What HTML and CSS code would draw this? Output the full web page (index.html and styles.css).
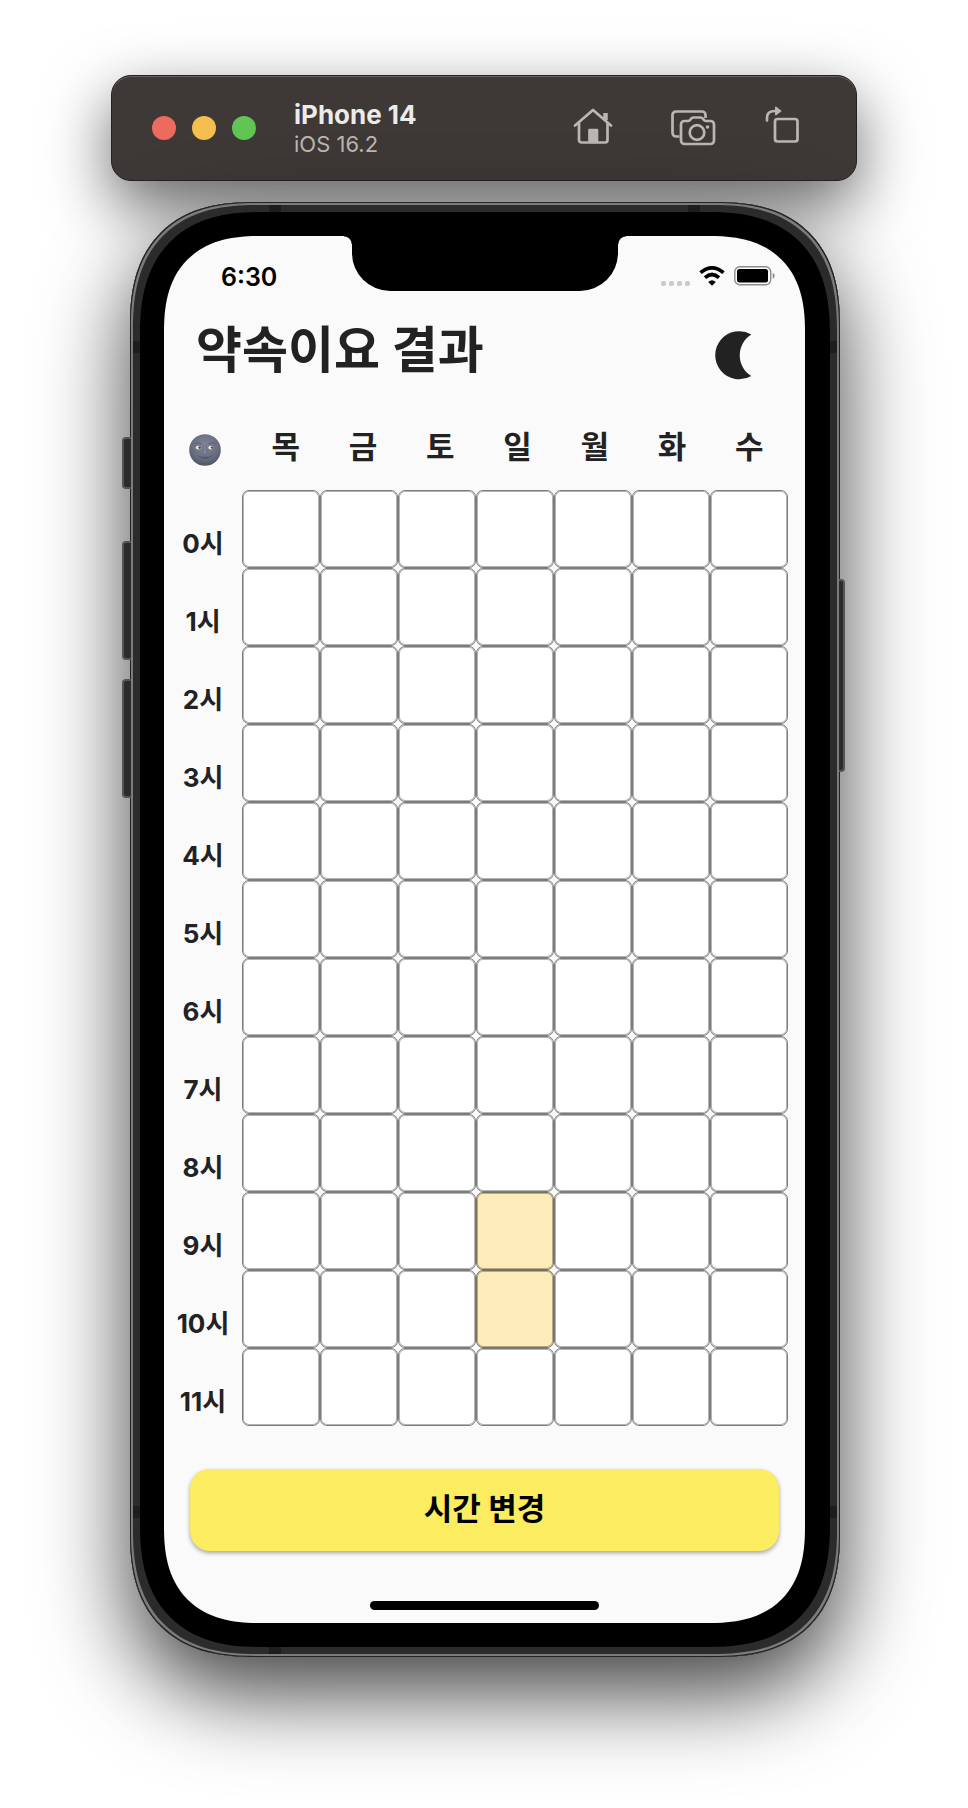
FILE: index.html
```html
<!DOCTYPE html>
<html lang="ko">
<head>
<meta charset="utf-8">
<meta name="viewport" content="width=device-width, initial-scale=1">
<title>약속이요 결과</title>
<link rel="stylesheet" href="styles.css">
</head>
<body>
<div class="simulator">
  <header class="toolbar">
    <div class="lights">
      <button class="light light-close" aria-label="Close"></button>
      <button class="light light-min" aria-label="Minimize"></button>
      <button class="light light-zoom" aria-label="Zoom"></button>
    </div>
    <div class="device">
      <div class="device-name">iPhone 14</div>
      <div class="device-os">iOS 16.2</div>
    </div>
    <div class="tools">
      <button class="tool" aria-label="Home">
        <svg width="48" height="48" viewBox="-1 0 48 48" fill="none" stroke="currentColor" stroke-width="2.700" stroke-linecap="round" stroke-linejoin="round"><path d="M6 23.500L24 8L42 23.500M10 21V38a2.500 2.500 0 0 0 2.500 2.500H36a2.500 2.500 0 0 0 2.500-2.500V21"/><path d="M36.500 11V18" stroke-width="4.500" stroke-linecap="butt"/><path d="M20.500 28h7.500v12h-7.500z" fill="currentColor"/></svg>
      </button>
      <button class="tool" aria-label="Screenshot">
        <svg width="48" height="48" viewBox="-4 0 48 48" fill="none" stroke="currentColor" stroke-width="2.700" stroke-linejoin="round"><path d="M10.500 34.500H7a3.500 3.500 0 0 1-3.500-3.500V13A3.500 3.500 0 0 1 7 9.500h26a3.500 3.500 0 0 1 3.500 3.500v3"/><path d="M12 22.500a3.500 3.500 0 0 1 3.500-3.500h3.500q1.500 0 2.500-1.500l.5-.8q1-1.200 2.500-1.200h7q1.500 0 2.500 1.200l.5.8q1 1.500 2.500 1.500H41.500a3.500 3.500 0 0 1 3.500 3.500V38.500a3.500 3.500 0 0 1-3.500 3.500H15.500a3.500 3.500 0 0 1-3.500-3.500z"/><circle cx="28" cy="30.500" r="7.300"/><circle cx="38.500" cy="25" r="1.800" fill="currentColor" stroke="none"/></svg>
      </button>
      <button class="tool" aria-label="Rotate">
        <svg width="48" height="48" viewBox="1 1 48 48" fill="none" stroke="currentColor" stroke-width="2.700" stroke-linecap="round" stroke-linejoin="round"><rect x="14" y="18" width="22.500" height="22.500" rx="2.500"/><path d="M6 19.500v-3q0-6.500 8-6.500"/><path d="M14.800 6.300v7.400l4.900-3.700z" fill="currentColor" stroke-width="1.500"/></svg>
      </button>
    </div>
  </header>

  <main class="phone">
    <i class="side side-mute"></i><i class="side side-up"></i><i class="side side-down"></i><i class="side side-power"></i>
    <i class="band band-top band-l"></i><i class="band band-top band-r"></i>
    <i class="band band-bottom band-l"></i>
    <i class="band band-left band-hi"></i><i class="band band-left band-lo"></i>
    <i class="band band-right band-hi"></i><i class="band band-right band-lo"></i>
    <div class="screen">
      <div class="status">
        <div class="time">6:30</div>
        <div class="notch"></div>
        <div class="signals">
          <span class="cell-dots"><i></i><i></i><i></i><i></i></span>
          <svg width="26" height="20" viewBox="0 0 26 20" fill="none" stroke="#000" stroke-width="3.600"><path d="M1.500 6.700Q13-3 24.500 6.700"/><path d="M6 11.600Q13 5.400 20 11.600"/><path d="M13 19.800L9.200 16Q13 12.600 16.800 16z" fill="#000" stroke="none"/></svg>
          <svg width="41" height="20" viewBox="0 0 41 20"><rect x=".8" y=".8" width="35.900" height="18" rx="5" fill="none" stroke="#8d8d8d" stroke-width="1.400"/><rect x="3" y="3" width="31" height="13.500" rx="2.500"/><path d="M38.700 6.800q2 1 2 3t-2 3z" fill="#8d8d8d"/></svg>
        </div>
      </div>

      <div class="heading">
        <h1 class="title">약속이요 결과</h1>
        <button class="theme" aria-label="다크 모드">
          <svg width="36" height="48" viewBox="0 0 36 48"><path d="M35.300 3.500A24 24 0 1 0 35.300 45C20 35.500 20 13 35.300 3.500z" fill="#222"/></svg>
        </button>
      </div>

      <table class="schedule">
        <thead>
          <tr>
            <th class="phase"><svg width="32" height="32" viewBox="0 0 32 32" role="img" aria-label="새벽"><defs><radialGradient id="face" cx=".5" cy=".35" r=".65"><stop offset="0" stop-color="#81859a"/><stop offset=".7" stop-color="#666b7e"/><stop offset="1" stop-color="#505565"/></radialGradient></defs><circle cx="16" cy="16" r="15.800" fill="url(#face)"/><path d="M14.800 11q-.2 5-1.200 8.500 2.400 2 4.800 0Q17.400 16 17.200 11" fill="#7f8497" stroke="#626779" stroke-width=".6"/><path d="M9 21.500q7 6 14 0M12.500 23q3.500 1.200 7 0" fill="none" stroke="#4e5363" stroke-width=".8"/><path d="M5.500 10q3.500-2.500 7 0M19.500 10q3.500-2.500 7 0" fill="none" stroke="#5a5f70" stroke-width="1"/><ellipse cx="9.400" cy="13.600" rx="2.700" ry="1.900" fill="#eee9e4"/><ellipse cx="22" cy="13.600" rx="2.700" ry="1.900" fill="#eee9e4"/><circle cx="10.600" cy="13.600" r="1.400" fill="#6b5148"/><circle cx="23.200" cy="13.600" r="1.400" fill="#6b5148"/></svg></th>
            <th>목</th><th>금</th><th>토</th><th>일</th><th>월</th><th>화</th><th>수</th>
          </tr>
        </thead>
        <tbody>
          <tr><th>0시</th><td></td><td></td><td></td><td></td><td></td><td></td><td></td></tr>
          <tr><th>1시</th><td></td><td></td><td></td><td></td><td></td><td></td><td></td></tr>
          <tr><th>2시</th><td></td><td></td><td></td><td></td><td></td><td></td><td></td></tr>
          <tr><th>3시</th><td></td><td></td><td></td><td></td><td></td><td></td><td></td></tr>
          <tr><th>4시</th><td></td><td></td><td></td><td></td><td></td><td></td><td></td></tr>
          <tr><th>5시</th><td></td><td></td><td></td><td></td><td></td><td></td><td></td></tr>
          <tr><th>6시</th><td></td><td></td><td></td><td></td><td></td><td></td><td></td></tr>
          <tr><th>7시</th><td></td><td></td><td></td><td></td><td></td><td></td><td></td></tr>
          <tr><th>8시</th><td></td><td></td><td></td><td></td><td></td><td></td><td></td></tr>
          <tr><th>9시</th><td></td><td></td><td></td><td class="picked"></td><td></td><td></td><td></td></tr>
          <tr><th>10시</th><td></td><td></td><td></td><td class="picked"></td><td></td><td></td><td></td></tr>
          <tr><th>11시</th><td></td><td></td><td></td><td></td><td></td><td></td><td></td></tr>
        </tbody>
      </table>

      <button class="change">시간 변경</button>
      <div class="home-bar"></div>
    </div>
  </main>
</div>
</body>
</html>
```
FILE: styles.css
```css
* { box-sizing: border-box; }

body {
  margin: 0;
  padding: 75px 16px 150px;
  background: #fff;
  color: #222;
  font-family: Inter, "Noto Sans CJK KR", sans-serif;
}

button {
  padding: 0;
  border: 0;
  background: none;
  color: inherit;
  font: inherit;
}

svg { display: block; overflow: visible; }

.simulator {
  max-width: 746px;
  margin: 0 auto;
}

/* Simulator window bar */
.toolbar {
  display: flex;
  align-items: center;
  min-height: 106px;
  padding: 0 46px 0 40px;
  border: 1px solid #222;
  border-radius: 20px;
  background: #3e3936;
  color: #bbb6b2;
  box-shadow: inset 0 1px 0 #67625f, 0 24px 64px rgba(0, 0, 0, .6);
}

.lights { display: flex; gap: 16px; }
.light { width: 24px; height: 24px; border-radius: 50%; }
.light-close { background: #ed6a5e; }
.light-min { background: #f5bf4f; }
.light-zoom { background: #61c554; }

.device { margin-left: 38px; padding-top: 2px; }
.device-name { color: #ebebeb; font-size: 26px; font-weight: 700; line-height: 30px; }
.device-os { font-size: 22px; line-height: 28px; }

.tools { display: flex; gap: 49px; margin-left: auto; padding-bottom: 4px; }
.tool { width: 48px; height: 48px; }

/* Phone body */
.phone {
  position: relative;
  margin: 21px 17px 0 19px;
  padding: 34px 35px 34px 34px;
  border-radius: 104px;
  background: #000;
  box-shadow:
    inset 0 0 0 1px #222,
    inset 0 0 0 3px #7b7b7b,
    inset 0 0 0 10px #2b2b2b,
    0 36px 88px rgba(0, 0, 0, .75);
}

.side {
  position: absolute;
  left: -8px;
  width: 9px;
  border: 2px solid #555;
  border-right: 0;
  border-radius: 4px 0 0 4px;
  background: #2b2b2b;
}
.side-mute { top: 235px; height: 52px; }
.side-up { top: 339px; height: 119px; }
.side-down { top: 477px; height: 119px; }
.side-power {
  top: 377px;
  right: -5px;
  left: auto;
  width: 6px;
  height: 193px;
  border: 2px solid #555;
  border-left: 0;
  border-radius: 0 4px 4px 0;
}

.band { position: absolute; background: #1d1d1d; }
.band-top, .band-bottom { width: 12px; height: 7px; }
.band-left, .band-right { width: 7px; height: 12px; }
.band-top { top: 3px; }
.band-bottom { bottom: 3px; }
.band-left { left: 3px; }
.band-right { right: 3px; }
.band-l { left: 139px; }
.band-r { right: 140px; }
.band-hi { top: 139px; }
.band-lo { bottom: 139px; }

.screen {
  display: flex;
  flex-direction: column;
  overflow: hidden;
  border-radius: 80px;
  background: #fafafa;
}

@supports (corner-shape: superellipse(1.3)) {
  .phone { border-radius: 125px; corner-shape: superellipse(1.3); }
  .screen { border-radius: 96px; corner-shape: superellipse(1.3); }
}

/* Status bar */
.status {
  display: grid;
  grid-template-columns: 1fr 266px 1fr;
  color: #000;
}
.time {
  height: 55px;
  padding: 26px 0 0 57px;
  font-size: 25px;
  font-weight: 600;
  line-height: 30px;
}
.notch {
  position: relative;
  height: 55px;
  border-radius: 0 0 38px 38px;
  background: #000;
}
.notch::before, .notch::after {
  content: "";
  position: absolute;
  top: 0;
  width: 8px;
  height: 8px;
}
.notch::before { left: -8px; background: radial-gradient(circle at 0 100%, transparent 7px, #000 8px); }
.notch::after { right: -8px; background: radial-gradient(circle at 100% 100%, transparent 7px, #000 8px); }
.signals {
  display: flex;
  align-items: flex-end;
  gap: 9px;
  justify-content: flex-end;
  height: 50px;
  padding-right: 30px;
}
.cell-dots { display: flex; gap: 3px; }
.cell-dots i { width: 5px; height: 5px; border-radius: 2px; background: #c9c9c9; }

/* Page heading */
.heading {
  display: flex;
  align-items: flex-start;
  justify-content: space-between;
  padding: 29px 53px 26px 32px;
}
.title { margin: 0; font-size: 50px; font-weight: 700; line-height: 60px; }
.theme { padding-top: 11px; }

/* Timetable */
.schedule { display: block; }
.schedule thead, .schedule tbody { display: block; }
.schedule tr {
  display: grid;
  grid-template-columns: 78px repeat(7, 1fr);
  padding-right: 17px;
}
.schedule thead tr {
  grid-template-columns: 83px repeat(7, 1fr);
  align-items: center;
  padding-bottom: 2px;
}
.schedule thead th { padding: 0; font-size: 31px; font-weight: 700; line-height: 82px; }
.schedule .phase { display: flex; padding: 6px 0 0 25px; }
.schedule tbody th {
  padding: 30px 0 0;
  font-size: 26px;
  font-weight: 700;
  line-height: 48px;
}
.schedule td {
  padding: 0;
  border: 1px solid #7c7c7c;
  border-radius: 7px;
  background: #fff;
  box-shadow: inset 0 0 0 1px #b5b5b5;
}
.schedule .picked {
  border-color: #79705a;
  background: #fcecba;
  box-shadow: inset 0 0 0 1px #b8ab84;
}

.change {
  margin: 43px 26px 0;
  border-radius: 20px;
  background: #fcec60;
  color: #000;
  font-size: 31px;
  font-weight: 700;
  line-height: 80px;
  padding-bottom: 2px;
  box-shadow: 0 2px 4px rgba(0, 0, 0, .35);
}
.home-bar {
  align-self: center;
  width: 229px;
  height: 9px;
  margin: 50px 0 13px;
  border-radius: 5px;
  background: #000;
}
```
